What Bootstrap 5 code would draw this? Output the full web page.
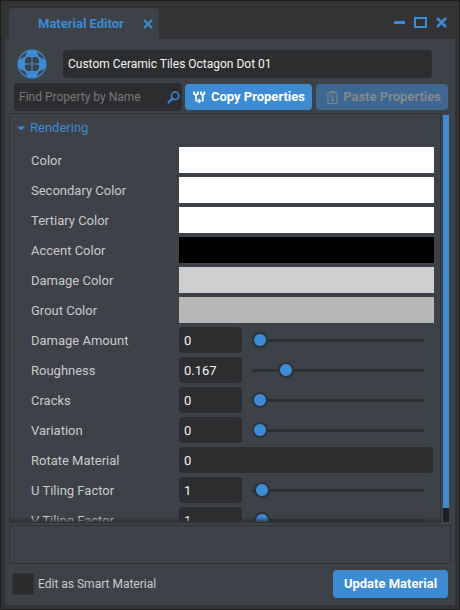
<!DOCTYPE html>
<html lang="en" data-bs-theme="dark">
<head>
<meta charset="utf-8">
<meta name="viewport" content="width=device-width, initial-scale=1">
<title>Material Editor</title>
<link href="https://cdn.jsdelivr.net/npm/bootstrap@5.3.0/dist/css/bootstrap.min.css" rel="stylesheet">
<style>
:root { --accent: #3c8bd3; --panel: #3d4148; --frame: #323335; --field: #2c2d2f; --line: #313235; }
body { font-family: Roboto, "Liberation Sans", sans-serif; font-size: 13px; line-height: 16px; color: #c9cacc; background: var(--frame); }
.editor { border: 1px solid #1e1e1f; padding: 0 4px 4px; }
.titlebar { height: 39px; padding: 7px 8px 0 4px; }
.doc-tab { width: 150px; background: var(--panel); border-radius: 4px 4px 0 0; color: var(--accent); padding: 0 6px 0 29px; }
.doc-tab h1 { font-size: 13px; line-height: 16px; font-weight: 700; color: var(--accent); }
.icon-btn { color: var(--accent); background: none; border: 0; padding: 0; line-height: 0; }
.window-tools { gap: 9px; padding-bottom: 3px; }
.sheet { background: var(--panel); padding: 10px 4px 7px; }
.name-row { padding: 0 19px 0 8px; gap: 16px; }
.tool-row { padding: 0 3px 0 5px; margin-top: 4px; gap: 3px; }
.field, .field:focus { background: var(--field); border: 0; border-radius: 4px; color: #f4f4f4; font-size: 12px; line-height: 16px; padding: 0 5px; min-height: 0; box-shadow: none; }
.name-field { height: 28px; }
.search { background: var(--field); border-radius: 4px; height: 28px; padding-right: 2px; }
.search .field::placeholder { color: #77797e; opacity: 1; }
.action { background: var(--accent); color: #fff; border: 0; border-radius: 4px; font-size: 13px; line-height: 16px; font-weight: 700; padding: 0 7px; height: 26px; gap: 5px; }
.action:hover { background: #4a97dd; color: #fff; }
.copy { width: 127px; }
.paste { width: 132px; margin-left: 1px; }
.paste:disabled { background: #3e6791; color: #84888e; opacity: 1; }
.save { width: 115px; height: 28px; }
.list-area { margin-top: 2px; gap: 2px; }
.props { border: 1px solid var(--line); padding: 0 6px 0 7px; }
.props::after { content: ""; position: absolute; left: 0; right: 0; bottom: 0; height: 5px; background: linear-gradient(transparent, #2c2d2fcc); }
.group-toggle { color: var(--accent); background: none; border: 0; padding: 6px 0 9px; gap: 5px; font-size: 13px; line-height: 16px; }
.prop { height: 30px; padding-left: 14px; }
.prop-label { width: 148px; padding-top: 2px; }
.swatch { height: 26px; border: 0; padding: 0; }
.number, .number:focus { height: 26px; width: 63px; font-size: 13px; }
.number-wide, .number-wide:focus { height: 26px; margin-right: 1px; font-size: 13px; }
.slide { appearance: none; height: 16px; margin: 0 10px; background: none; min-width: 0; }
.slide::-webkit-slider-runnable-track { height: 3px; background: #2d2f31; }
.slide::-webkit-slider-thumb { appearance: none; box-sizing: border-box; width: 16px; height: 16px; margin-top: -7px; border: 2px solid #2d333a; border-radius: 50%; background: var(--accent); }
.scroll-rail { width: 6px; margin: 2px 2px 1px 0; background: #1e1f20; padding-bottom: 14px; }
.scroll-grip { background: var(--accent); }
.note { height: 39px; border: 1px solid var(--line); margin-top: 2px; }
.foot { padding: 0 3px; margin-top: 6px; font-size: 12px; }
.tick { width: 22px; height: 22px; margin: 0; border: 1px solid #333537; border-radius: 4px; background-color: #2b2c2d; }
</style>
</head>
<body>
<div class="editor vh-100 d-flex flex-column overflow-hidden">
  <header class="titlebar d-flex justify-content-between">
    <div class="doc-tab d-flex align-items-center justify-content-between">
      <h1 class="m-0">Material Editor</h1>
      <button class="icon-btn" type="button" aria-label="Close tab"><svg width="10" height="10" viewBox="0 0 10 10" stroke="currentColor" stroke-width="2.2"><path d="M1 1l8 8M9 1L1 9"/></svg></button>
    </div>
    <div class="window-tools d-flex align-items-center">
      <button class="icon-btn" type="button" aria-label="Minimize"><svg width="11" height="11" viewBox="0 0 11 11" fill="currentColor"><path d="M0 4h11v3H0z"/></svg></button>
      <button class="icon-btn" type="button" aria-label="Maximize"><svg width="13" height="11" viewBox="0 0 13 11" fill="none" stroke="currentColor" stroke-width="2"><path d="M1 1h11v9H1z"/></svg></button>
      <button class="icon-btn" type="button" aria-label="Close"><svg width="11" height="11" viewBox="0 0 11 11" stroke="currentColor" stroke-width="2.5"><path d="M1 1l9 9M10 1l-9 9"/></svg></button>
    </div>
  </header>

  <main class="sheet d-flex flex-column flex-grow-1 overflow-hidden">
    <div class="name-row d-flex align-items-center">
      <svg class="flex-shrink-0" width="30" height="30" viewBox="0 0 30 30" aria-hidden="true">
        <circle cx="15" cy="15" r="14.500" fill="#3c8bd3"/>
        <path fill="#3d4148" d="M2.500 10.500Q4.500 5 10.500 2.500Q9 5 8 8Q5 9 2.500 10.500zM27.500 10.500Q25.500 5 19.500 2.500Q21 5 22 8Q25 9 27.500 10.500zM2.500 19.500Q4.500 25 10.500 27.500Q9 25 8 22Q5 21 2.500 19.500zM27.500 19.500Q25.500 25 19.500 27.500Q21 25 22 22Q25 21 27.500 19.500z"/>
        <path fill="#3d4148" d="M10.500 8h9l2.500 2.500v9L19.500 22h-9L8 19.500v-9z"/>
        <path fill="none" stroke="#3c8bd3" stroke-width="1.200" d="M15 8v14M8 15h14"/>
      </svg>
      <input class="field name-field form-control" type="text" value="Custom Ceramic Tiles Octagon Dot 01" aria-label="Material name">
    </div>

    <div class="tool-row d-flex align-items-center">
      <div class="search d-flex align-items-center flex-grow-1">
        <input class="field form-control h-100" type="text" placeholder="Find Property by Name" aria-label="Find Property by Name">
        <button class="icon-btn" type="button" aria-label="Search"><svg width="13" height="13" viewBox="0 0 13 13" fill="none" stroke="currentColor"><circle cx="8.200" cy="4.800" r="3.700" stroke-width="1.500"/><path d="M5.200 7.800L1 12" stroke-width="2.200"/></svg></button>
      </div>
      <button class="action copy btn d-flex align-items-center flex-shrink-0 text-nowrap" type="button">
        <svg width="14" height="14" viewBox="0 0 14 14" fill="none" stroke="currentColor" aria-hidden="true"><path stroke-width="1.800" d="M2 1.500v2L3.500 5h1L6 3.500v-2M4 5v4M9 1.500v2L10.500 5h.5L12.500 3.500v-2M10.800 5v6.500"/><path stroke-width="1.300" d="M4 8.500v2.500h4M6.500 9l2 2l-2 2"/></svg>
        Copy Properties
      </button>
      <button class="action paste btn d-flex align-items-center justify-content-end flex-shrink-0 text-nowrap" type="button" disabled>
        <svg width="11" height="13" viewBox="0 0 11 13" fill="none" stroke="currentColor" aria-hidden="true"><path d="M1 2h9v10.500H1zM3.500 2V.5h4V2M4 4v1.500l1.500 1l1.500-1V4"/><path stroke-width="1.500" d="M5.500 6.500V11"/></svg>
        Paste Properties
      </button>
    </div>

    <div class="list-area d-flex flex-grow-1 overflow-hidden">
      <section class="props position-relative flex-grow-1 overflow-hidden">
        <button class="group-toggle d-flex align-items-center" type="button" aria-expanded="true">
          <svg width="8" height="5" viewBox="0 0 8 5" fill="currentColor" aria-hidden="true"><path d="M0 .5h8L4 4.500z"/></svg>Rendering
        </button>
        <div class="prop d-flex align-items-center"><label class="prop-label flex-shrink-0" for="c1">Color</label><button id="c1" class="swatch flex-grow-1" style="background:#fff" type="button"></button></div>
        <div class="prop d-flex align-items-center"><label class="prop-label flex-shrink-0" for="c2">Secondary Color</label><button id="c2" class="swatch flex-grow-1" style="background:#fff" type="button"></button></div>
        <div class="prop d-flex align-items-center"><label class="prop-label flex-shrink-0" for="c3">Tertiary Color</label><button id="c3" class="swatch flex-grow-1" style="background:#fff" type="button"></button></div>
        <div class="prop d-flex align-items-center"><label class="prop-label flex-shrink-0" for="c4">Accent Color</label><button id="c4" class="swatch flex-grow-1" style="background:#000" type="button"></button></div>
        <div class="prop d-flex align-items-center"><label class="prop-label flex-shrink-0" for="c5">Damage Color</label><button id="c5" class="swatch flex-grow-1" style="background:#cfcfcf" type="button"></button></div>
        <div class="prop d-flex align-items-center"><label class="prop-label flex-shrink-0" for="c6">Grout Color</label><button id="c6" class="swatch flex-grow-1" style="background:#b7b7b7" type="button"></button></div>
        <div class="prop d-flex align-items-center"><label class="prop-label flex-shrink-0" for="n1">Damage Amount</label><input id="n1" class="field number form-control flex-shrink-0" type="text" value="0"><input class="slide flex-grow-1" type="range" min="0" max="1" step="any" value="0" aria-label="Damage Amount"></div>
        <div class="prop d-flex align-items-center"><label class="prop-label flex-shrink-0" for="n2">Roughness</label><input id="n2" class="field number form-control flex-shrink-0" type="text" value="0.167"><input class="slide flex-grow-1" type="range" min="0" max="1" step="any" value="0.167" aria-label="Roughness"></div>
        <div class="prop d-flex align-items-center"><label class="prop-label flex-shrink-0" for="n3">Cracks</label><input id="n3" class="field number form-control flex-shrink-0" type="text" value="0"><input class="slide flex-grow-1" type="range" min="0" max="1" step="any" value="0" aria-label="Cracks"></div>
        <div class="prop d-flex align-items-center"><label class="prop-label flex-shrink-0" for="n4">Variation</label><input id="n4" class="field number form-control flex-shrink-0" type="text" value="0"><input class="slide flex-grow-1" type="range" min="0" max="1" step="any" value="0" aria-label="Variation"></div>
        <div class="prop d-flex align-items-center"><label class="prop-label flex-shrink-0" for="n5">Rotate Material</label><input id="n5" class="field number-wide form-control" type="text" value="0"></div>
        <div class="prop d-flex align-items-center"><label class="prop-label flex-shrink-0" for="n6">U Tiling Factor</label><input id="n6" class="field number form-control flex-shrink-0" type="text" value="1"><input class="slide flex-grow-1" type="range" min="0" max="80" step="any" value="1" aria-label="U Tiling Factor"></div>
        <div class="prop d-flex align-items-center"><label class="prop-label flex-shrink-0" for="n7">V Tiling Factor</label><input id="n7" class="field number form-control flex-shrink-0" type="text" value="1"><input class="slide flex-grow-1" type="range" min="0" max="80" step="any" value="1" aria-label="V Tiling Factor"></div>
      </section>
      <div class="scroll-rail flex-shrink-0"><div class="scroll-grip h-100"></div></div>
    </div>

    <div class="note flex-shrink-0"></div>

    <footer class="foot d-flex align-items-center justify-content-between">
      <div class="d-flex align-items-center">
        <input id="smart" class="tick form-check-input flex-shrink-0" type="checkbox">
        <label class="ps-1" for="smart">Edit as Smart Material</label>
      </div>
      <button class="action save btn text-nowrap" type="button">Update Material</button>
    </footer>
  </main>
</div>
<script src="https://cdn.jsdelivr.net/npm/bootstrap@5.3.0/dist/js/bootstrap.bundle.min.js"></script>
</body>
</html>
